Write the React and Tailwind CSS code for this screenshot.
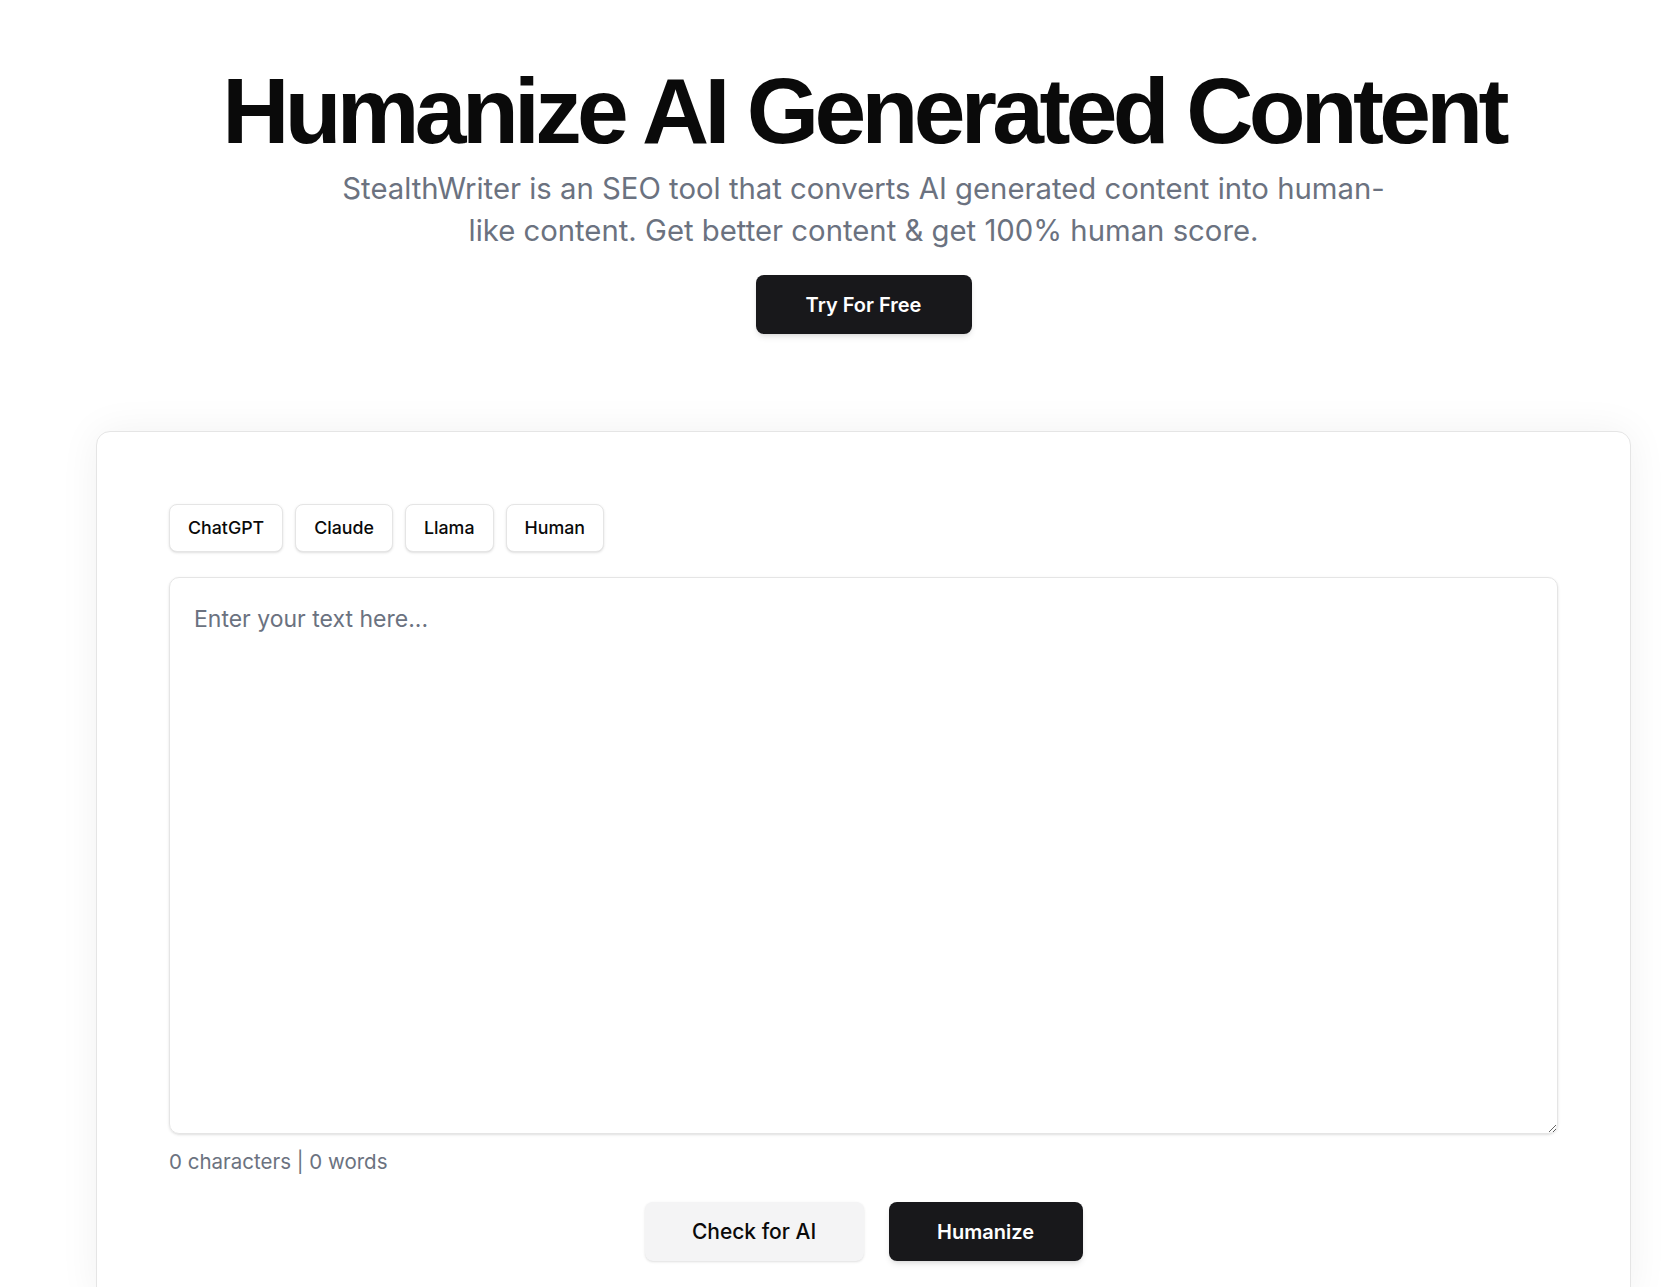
export default function App() {
  const head = { fontFamily: '"Liberation Sans", Arial, sans-serif' };
  const body = { fontFamily: 'Inter, "Liberation Sans", Arial, sans-serif' };
  return (
    <div className="min-h-screen bg-white pl-[52px]" style={body}>
      <div className="flex flex-col items-center pt-[65px]">
        <h1
          className="text-[93px] leading-[93px] font-bold tracking-[-0.05em] text-[#0a0a0a]"
          style={head}
        >
          Humanize AI Generated Content
        </h1>
        <p className="mt-[10px] w-[1070px] text-center text-[29.3px] leading-[42px] text-[#6b7280]">
          StealthWriter is an SEO tool that converts AI generated content into human-like content. Get better content &amp; get 100% human score.
        </p>
        <button className="mt-[23px] h-[59px] w-[216px] rounded-[8px] bg-[#18181b] text-[20px] font-semibold text-white shadow-md">
          Try For Free
        </button>
      </div>
      <div className="mx-[44px] mt-[97px] rounded-[14px] border border-[#e5e5e5] bg-white px-[72px] pt-[72px] pb-[40px] shadow-[0_0_40px_rgba(0,0,0,0.06)]">
        <div className="flex gap-[12px]">
          {['ChatGPT', 'Claude', 'Llama', 'Human'].map((t) => (
            <button
              key={t}
              className="h-[48px] rounded-[8px] border border-[#e5e5e5] bg-white px-[18px] text-[17.8px] font-medium text-[#0a0a0a] shadow-sm"
            >
              {t}
            </button>
          ))}
        </div>
        <textarea
          className="mt-[25px] block h-[557px] w-full resize-y rounded-[10px] border border-[#e5e5e5] px-[24px] pt-[25px] pb-[20px] text-[23px] leading-[32px] text-[#0a0a0a] shadow-sm outline-none placeholder:text-[#6b7280]"
          placeholder="Enter your text here..."
          style={body}
        />
        <div className="mt-[14px] text-[20.5px] leading-[28px] text-[#6b7280]">0 characters | 0 words</div>
        <div className="mt-[26px] flex justify-center gap-[25px]">
          <button className="h-[59px] w-[219px] rounded-[8px] bg-[#f4f4f5] text-[21px] font-medium text-[#0a0a0a] shadow-sm">
            Check for AI
          </button>
          <button className="h-[59px] w-[194px] rounded-[8px] bg-[#18181b] text-[20px] font-semibold text-white shadow-md">
            Humanize
          </button>
        </div>
      </div>
    </div>
  );
}
